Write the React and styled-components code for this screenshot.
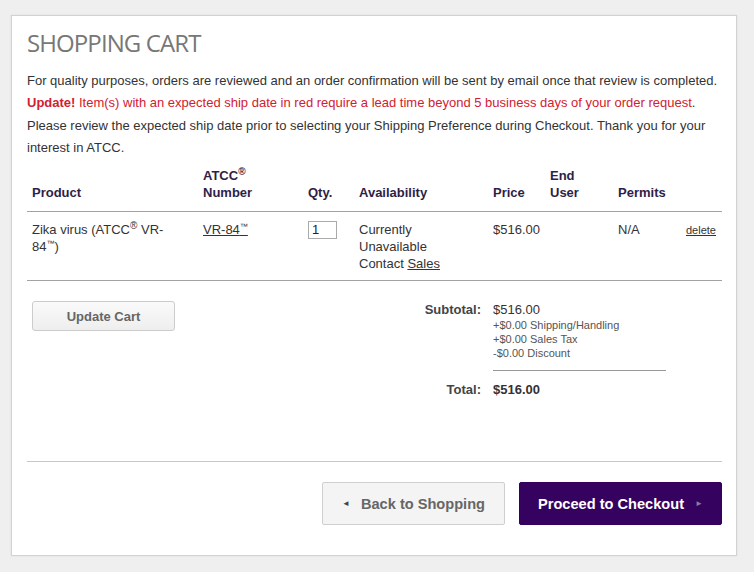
import React from 'react';
import styled, { createGlobalStyle } from 'styled-components';

const GlobalStyle = createGlobalStyle`
    html, body {
        margin: 0;
        padding: 0;
        background: #efefef;
    }
    body {
        font-family: "Liberation Sans", Arial, sans-serif;
        font-size: 13px;
        color: #333;
    }
`;

const Page = styled.div`
    padding: 15px 17px 16px 11px;
`;

const Panel = styled.div`
    background: #fff;
    border: 1px solid #d2d2d2;
    box-shadow: 0 0 2px rgba(0, 0, 0, 0.08);
    padding: 12px 14px 30px 15px;
    height: 541px;
    box-sizing: border-box;
    display: flex;
    flex-direction: column;
`;

const Title = styled.h1`
    font-family: "Open Sans", sans-serif;
    font-weight: 400;
    font-size: 24px;
    color: #777;
    margin: 0 0 12px 0;
    line-height: 30px;
    letter-spacing: -0.9px;
`;

const Intro = styled.p`
    margin: 0 0 8px 0;
    line-height: 22.3px;
`;

const Alert = styled.span`
    color: #d2202f;
`;

const Strong = styled.strong`
    font-weight: bold;
`;

const Table = styled.table`
    width: 100%;
    border-collapse: collapse;
    table-layout: fixed;
`;

const Col = styled.col`
    width: ${p => p.$w}px;
`;

const Th = styled.th`
    text-align: left;
    vertical-align: bottom;
    font-weight: bold;
    color: #2e1e48;
    line-height: 17px;
    padding: 0 5px 10px 5px;
    border-bottom: 1px solid #a3a3a3;
`;

const Td = styled.td`
    vertical-align: top;
    line-height: 17px;
    padding: 9px ${p => p.$wide ? 22 : 5}px 8px 5px;
    border-bottom: 1px solid #a3a3a3;
`;

const Sup = styled.sup`
    font-size: ${p => p.$tm ? 8 : 10}px;
    line-height: 0;
    vertical-align: 5px;
`;

const Link = styled.a`
    color: #333;
    text-decoration: underline;
`;

const SmallLink = styled(Link)`
    font-size: 11px;
    display: inline-block;
    line-height: 13px;
`;

const QtyInput = styled.input`
    width: 21px;
    height: 14px;
    border: 1px solid #aaa;
    padding: 1px 3px;
    font-family: "Liberation Sans", Arial, sans-serif;
    font-size: 13px;
    color: #222;
    margin: -1px 0 0 0;
`;

const Summary = styled.div`
    display: flex;
    align-items: flex-start;
    padding: 20px 0 0 5px;
`;

const GreyButton = styled.button`
    width: 143px;
    height: 30px;
    border: 1px solid #ccc;
    border-radius: 3px;
    background: linear-gradient(#fafafa, #eeeeee);
    font-family: "Liberation Sans", Arial, sans-serif;
    font-weight: bold;
    font-size: 13px;
    color: #666;
    padding: 0;
`;

const Totals = styled.div`
    margin-left: 179px;
    display: grid;
    grid-template-columns: 127px 173px;
    column-gap: 12px;
`;

const Label = styled.div`
    text-align: right;
    font-weight: bold;
    color: #444;
    line-height: 17px;
`;

const Value = styled.div`
    line-height: 17px;
    font-weight: ${p => p.$bold ? 'bold' : 'normal'};
`;

const Breakdown = styled.div`
    font-size: 11px;
    line-height: 14px;
    color: #555;
    padding-bottom: 10px;
    border-bottom: 1px solid #999;
    margin-bottom: 10px;
`;

const Spacer = styled.div`
    flex: 1;
`;

const Rule = styled.hr`
    border: 0;
    border-top: 1px solid #c8c8c8;
    margin: 0 0 20px 0;
`;

const Actions = styled.div`
    display: flex;
    justify-content: flex-end;
    gap: 14px;
`;

const NavButton = styled.button`
    height: 43px;
    width: ${p => p.$w}px;
    border-radius: 2px;
    border: 1px solid ${p => p.$primary ? '#33005e' : '#cfcfcf'};
    background: ${p => p.$primary ? '#35025f' : '#f4f4f4'};
    color: ${p => p.$primary ? '#fff' : '#666'};
    font-family: "Liberation Sans", Arial, sans-serif;
    font-weight: bold;
    font-size: 14.6px;
    display: flex;
    align-items: center;
    justify-content: center;
    gap: 11px;
    padding: 0;
`;

const Arrow = styled.span`
    font-size: 8px;
    color: ${p => p.$light ? '#8a7a9c' : '#444'};
`;

const App = () => (
    <Page>
        <GlobalStyle />
        <Panel>
            <Title>SHOPPING CART</Title>
            <Intro>
                For quality purposes, orders are reviewed and an order confirmation will be sent by email once that review is completed.<br />
                <Alert><Strong>Update!</Strong> Item(s) with an expected ship date in red require a lead time beyond 5 business days of your order request</Alert>.<br />
                Please review the expected ship date prior to selecting your Shipping Preference during Checkout. Thank you for your interest in ATCC.
            </Intro>
            <Table>
                <colgroup>
                    <Col $w={171} />
                    <Col $w={105} />
                    <Col $w={51} />
                    <Col $w={134} />
                    <Col $w={57} />
                    <Col $w={68} />
                    <Col $w={68} />
                    <Col $w={41} />
                </colgroup>
                <thead>
                    <tr>
                        <Th>Product</Th>
                        <Th>ATCC<Sup>®</Sup><br />Number</Th>
                        <Th>Qty.</Th>
                        <Th>Availability</Th>
                        <Th>Price</Th>
                        <Th>End<br />User</Th>
                        <Th>Permits</Th>
                        <Th></Th>
                    </tr>
                </thead>
                <tbody>
                    <tr>
                        <Td $wide>Zika virus (ATCC<Sup>®</Sup> VR-84<Sup $tm>™</Sup>)</Td>
                        <Td><Link href="#">VR-84<Sup $tm>™</Sup></Link></Td>
                        <Td><QtyInput defaultValue="1" /></Td>
                        <Td>Currently<br />Unavailable<br />Contact <Link href="#">Sales</Link></Td>
                        <Td>$516.00</Td>
                        <Td></Td>
                        <Td>N/A</Td>
                        <Td><SmallLink href="#">delete</SmallLink></Td>
                    </tr>
                </tbody>
            </Table>
            <Summary>
                <GreyButton>Update Cart</GreyButton>
                <Totals>
                    <Label>Subtotal:</Label>
                    <div>
                        <Value>$516.00</Value>
                        <Breakdown>
                            +$0.00 Shipping/Handling<br />
                            +$0.00 Sales Tax<br />
                            -$0.00 Discount
                        </Breakdown>
                    </div>
                    <Label>Total:</Label>
                    <Value $bold>$516.00</Value>
                </Totals>
            </Summary>
            <Spacer />
            <Rule />
            <Actions>
                <NavButton $w={183}><Arrow>◄</Arrow>Back to Shopping</NavButton>
                <NavButton $w={203} $primary>Proceed to Checkout<Arrow $light>►</Arrow></NavButton>
            </Actions>
        </Panel>
    </Page>
);

export default App;
